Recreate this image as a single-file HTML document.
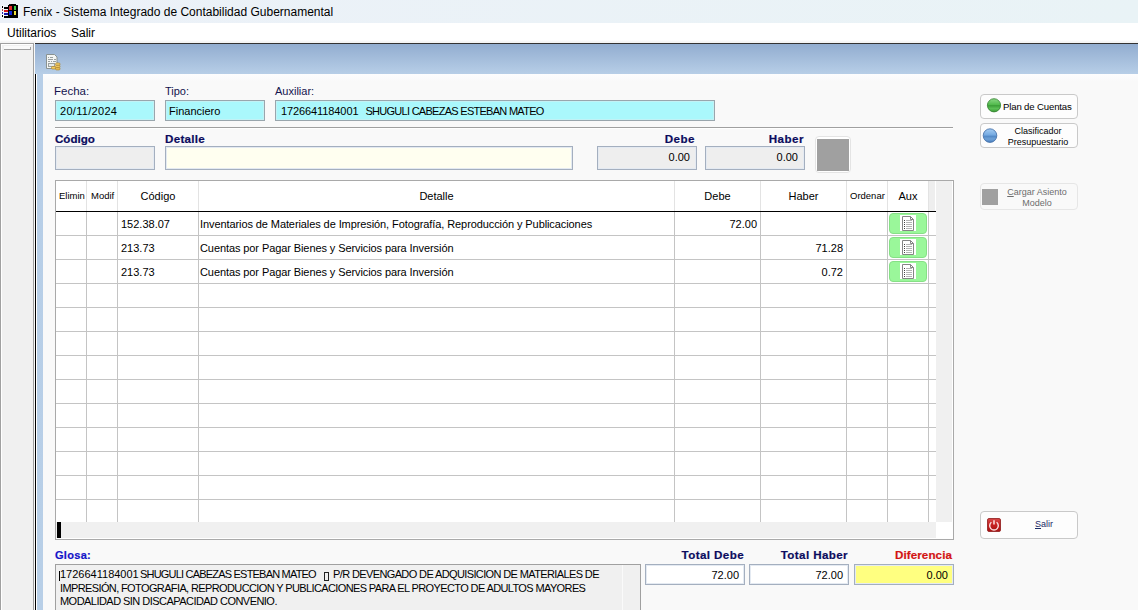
<!DOCTYPE html>
<html><head><meta charset="utf-8">
<style>
*{margin:0;padding:0;box-sizing:border-box}
html,body{width:1138px;height:610px;overflow:hidden;background:#f9f9f9;font-family:"Liberation Sans",sans-serif;color:#000}
.a{position:absolute}
.t{position:absolute;white-space:nowrap;line-height:1}
#title{left:0;top:0;width:1138px;height:23px;background:linear-gradient(90deg,#ecf1f8,#e9f3f6)}
#menu{left:0;top:23px;width:1138px;height:20px;background:linear-gradient(180deg,#fff 0,#fff 17px,#f4f4f4 19px)}
#leftp{left:0;top:43px;width:34px;height:567px;background:#f0f0f0;border-left:1px solid #a0a0a0;border-top:1px solid #a0a0a0;border-right:1px solid #a0a0a0;box-shadow:inset 1px 1px 0 #fff}
#mdi{left:34px;top:43px;width:1104px;height:567px;background:#fff}
#mdihdr{left:35px;top:43px;width:1103px;height:567px;border-top:1px solid #333;background:linear-gradient(180deg,#92add0 0px,#b7cee7 30px,#b8cfe7 567px)}
#content{left:43px;top:74px;width:1095px;height:536px;background:linear-gradient(180deg,#fdfdfe 0px,#f9f9f9 8px)}
.lbl{color:#14144e;font-size:11px}
.blbl{color:#0c0c5e;font-size:11px;font-weight:bold;-webkit-text-stroke:0.2px currentColor}
.inp{position:absolute;border:1px solid #a4afbf;box-shadow:inset 0 0 0 1px #e4eaf2}
.cyan{background:#aaf8fc;border-color:#99a6ad;box-shadow:inset 0 0 0 1px #c2f2f5}
.gray{background:#eeeeee}
.yel{background:#fffff0}
.num{font-size:11px}
.grid{position:absolute;background:#c4c4c4}
.btn{position:absolute;border:1px solid #c9c9c9;border-radius:4px;background:#fdfdfd}
.th{font-size:11px;color:#000}
.th9{font-size:9.5px;color:#000}
.cell{font-size:11px;color:#000}
.auxb{position:absolute;width:38px;height:21px;background:#9af79a;border:1px solid #86e086;border-radius:4px}
.btxt{font-size:9px;color:#000}
.gl{font-size:11px;color:#000}
</style></head><body>
<div id="title" class="a"></div>
<div class="t" style="left:23px;top:6px;font-size:12px;color:#000">Fenix - Sistema Integrado de Contabilidad Gubernamental</div>
<div id="menu" class="a"></div>
<div class="t" style="left:7px;top:27px;font-size:12px">Utilitarios</div>
<div class="t" style="left:71px;top:27px;font-size:12px">Salir</div>

<div id="leftp" class="a"></div>
<div class="a" style="left:4px;top:46px;width:26px;height:3px;background:#fafafa"></div><div class="a" style="left:4px;top:49px;width:27px;height:1px;background:#a0a0a0"></div><div class="a" style="left:30px;top:47px;width:1px;height:3px;background:#a0a0a0"></div>
<div id="mdihdr" class="a"></div>
<div class="a" style="left:35px;top:74px;width:1px;height:536px;background:#000"></div><div class="a" style="left:36px;top:74px;width:1px;height:536px;background:#fff"></div>
<div id="content" class="a"></div>
<svg class="a" style="left:0;top:0" width="22" height="22" viewBox="0 0 22 22" shape-rendering="crispEdges">
<rect x="1" y="5" width="3" height="13" fill="#fff" opacity="0.6"/>
<rect x="8" y="5" width="10" height="13" fill="#000"/><rect x="11" y="4" width="5" height="1" fill="#000"/><rect x="9" y="4" width="2" height="1" fill="#222"/>
<rect x="9" y="6" width="3" height="4" fill="#e22828"/><rect x="14" y="6" width="2" height="4" fill="#3ad04a"/>
<rect x="9" y="11" width="3" height="4" fill="#1428e0"/><rect x="14" y="11" width="2" height="4" fill="#f2e23a"/>
<rect x="2" y="6" width="1" height="2" fill="#000"/><rect x="4" y="7" width="4" height="2" fill="#000"/>
<rect x="2" y="9" width="1" height="2" fill="#b04040"/><rect x="4" y="10" width="4" height="2" fill="#d81818"/>
<rect x="2" y="12" width="1" height="2" fill="#2a2ab0"/><rect x="4" y="13" width="4" height="2" fill="#1414a8"/>
<rect x="2" y="15" width="1" height="2" fill="#000"/><rect x="4" y="16" width="4" height="2" fill="#000"/>
</svg>
<svg class="a" style="left:44px;top:52px" width="18" height="20" viewBox="0 0 18 20">
<path d="M2.5 2.5h8l2.5 2.5v11.5h-10.5z" fill="#f4f6f4" stroke="#8a9290" stroke-width="1"/>
<path d="M4 5.5h1M6 5.5h3M4 7.5h5M10 7.5h2M4 9.5h2M7 9.5h1M9 9.5h3" stroke="#9aa0a0" stroke-width="1"/>
<rect x="4.5" y="11.5" width="6" height="3" fill="#e8ecea" stroke="#9aa0a0" stroke-width="1"/>
<rect x="7.5" y="14.5" width="4" height="2.5" rx="1" fill="#f2cc62" stroke="#b08428" stroke-width="0.7"/>
<rect x="11.5" y="11" width="4.5" height="2.3" rx="1" fill="#f6d470" stroke="#b08428" stroke-width="0.7"/>
<rect x="11.5" y="13.3" width="4.5" height="2.3" rx="1" fill="#f0c860" stroke="#b08428" stroke-width="0.7"/>
<rect x="11.5" y="15.6" width="4.5" height="2.3" rx="1" fill="#e8c058" stroke="#b08428" stroke-width="0.7"/>
</svg>


<!-- header row -->
<div class="t lbl" style="left:54px;top:86px;letter-spacing:0px;font-size:11.5px">Fecha:</div>
<div class="t lbl" style="left:165px;top:86px">Tipo:</div>
<div class="t lbl" style="left:275px;top:86px">Auxiliar:</div>
<div class="inp cyan" style="left:55px;top:100px;width:100px;height:21px"></div>
<div class="inp cyan" style="left:165px;top:100px;width:100px;height:21px"></div>
<div class="inp cyan" style="left:275px;top:100px;width:440px;height:21px"></div>
<div class="t num" style="left:60px;top:106px;letter-spacing:0.3px">20/11/2024</div>
<div class="t num" style="left:169px;top:106px">Financiero</div>
<div class="t num" style="left:281px;top:106px;white-space:pre;letter-spacing:-0.1px">1726641184001<span style="letter-spacing:-0.72px">   SHUGULI CABEZAS ESTEBAN MATEO</span></div>
<div class="a" style="left:55px;top:127px;width:898px;height:1px;background:#a0a0a0"></div>
<div class="a" style="left:55px;top:128px;width:898px;height:1px;background:#fff"></div>

<div class="t blbl" style="left:55px;top:133px;font-size:11.6px;letter-spacing:0px">Código</div>
<div class="t blbl" style="left:165px;top:133px;font-size:11.6px;letter-spacing:0.3px">Detalle</div>
<div class="t blbl" style="left:597px;top:133px;width:98px;text-align:right;letter-spacing:0.5px;font-size:11.6px">Debe</div>
<div class="t blbl" style="left:705px;top:133px;width:99px;text-align:right;letter-spacing:0.5px;font-size:11.6px">Haber</div>
<div class="inp gray" style="left:55px;top:146px;width:100px;height:24px"></div>
<div class="inp yel" style="left:165px;top:146px;width:408px;height:24px"></div>
<div class="inp gray" style="left:597px;top:146px;width:100px;height:24px"></div>
<div class="inp gray" style="left:705px;top:146px;width:100px;height:24px"></div>
<div class="t num" style="left:597px;top:152px;width:93px;text-align:right">0.00</div>
<div class="t num" style="left:705px;top:152px;width:93px;text-align:right">0.00</div>
<div class="a" style="left:815px;top:136px;width:36px;height:37px;border:1px solid #e4e4e4;border-radius:4px;background:#fff"></div>
<div class="a" style="left:817px;top:139px;width:32px;height:32px;background:#a0a0a0"></div>

<!-- table -->
<div id="tbl" class="a" style="left:55px;top:180px;width:899px;height:360px;border:1px solid #a9a9a9;background:#fff"></div>
<div class="a" style="left:86px;top:181px;width:1px;height:30px;background:#e3e3e3"></div>
<div class="a" style="left:117px;top:181px;width:1px;height:30px;background:#e3e3e3"></div>
<div class="a" style="left:198px;top:181px;width:1px;height:30px;background:#e3e3e3"></div>
<div class="a" style="left:674px;top:181px;width:1px;height:30px;background:#e3e3e3"></div>
<div class="a" style="left:760px;top:181px;width:1px;height:30px;background:#e3e3e3"></div>
<div class="a" style="left:846px;top:181px;width:1px;height:30px;background:#e3e3e3"></div>
<div class="a" style="left:887px;top:181px;width:1px;height:30px;background:#e3e3e3"></div>
<div class="a" style="left:928px;top:181px;width:1px;height:30px;background:#e3e3e3"></div>
<div class="a" style="left:929px;top:181px;width:6px;height:30px;background:#eeeeee"></div>
<div class="a" style="left:56px;top:211px;width:880px;height:1px;background:#000"></div>
<div class="grid" style="left:86px;top:212px;width:1px;height:310px"></div>
<div class="grid" style="left:117px;top:212px;width:1px;height:310px"></div>
<div class="grid" style="left:198px;top:212px;width:1px;height:310px"></div>
<div class="grid" style="left:674px;top:212px;width:1px;height:310px"></div>
<div class="grid" style="left:760px;top:212px;width:1px;height:310px"></div>
<div class="grid" style="left:846px;top:212px;width:1px;height:310px"></div>
<div class="grid" style="left:887px;top:212px;width:1px;height:310px"></div>
<div class="grid" style="left:928px;top:212px;width:1px;height:310px"></div>
<div class="grid" style="left:56px;top:235px;width:880px;height:1px"></div>
<div class="grid" style="left:56px;top:259px;width:880px;height:1px"></div>
<div class="grid" style="left:56px;top:283px;width:880px;height:1px"></div>
<div class="grid" style="left:56px;top:307px;width:880px;height:1px"></div>
<div class="grid" style="left:56px;top:331px;width:880px;height:1px"></div>
<div class="grid" style="left:56px;top:355px;width:880px;height:1px"></div>
<div class="grid" style="left:56px;top:379px;width:880px;height:1px"></div>
<div class="grid" style="left:56px;top:403px;width:880px;height:1px"></div>
<div class="grid" style="left:56px;top:427px;width:880px;height:1px"></div>
<div class="grid" style="left:56px;top:451px;width:880px;height:1px"></div>
<div class="grid" style="left:56px;top:475px;width:880px;height:1px"></div>
<div class="grid" style="left:56px;top:499px;width:880px;height:1px"></div>
<!-- header labels -->
<div class="t th9" style="left:59px;top:191px">Elimin</div>
<div class="t th9" style="left:91px;top:191px">Modif</div>
<div class="t th" style="left:118px;top:191px;width:80px;text-align:center">Código</div>
<div class="t th" style="left:199px;top:191px;width:475px;text-align:center">Detalle</div>
<div class="t th" style="left:675px;top:191px;width:85px;text-align:center">Debe</div>
<div class="t th" style="left:761px;top:191px;width:85px;text-align:center">Haber</div>
<div class="t th9" style="left:850px;top:191px">Ordenar</div>
<div class="t th" style="left:888px;top:191px;width:40px;text-align:center">Aux</div>
<!-- rows -->
<div class="t cell" style="left:121px;top:219px">152.38.07</div>
<div class="t cell" style="left:200px;top:219px;letter-spacing:-0.09px">Inventarios de Materiales de Impresión, Fotografía, Reproducción y Publicaciones</div>
<div class="t cell" style="left:675px;top:219px;width:82px;text-align:right">72.00</div>
<div class="t cell" style="left:121px;top:243px">213.73</div>
<div class="t cell" style="left:200px;top:243px;letter-spacing:-0.09px">Cuentas por Pagar Bienes y Servicios para Inversión</div>
<div class="t cell" style="left:761px;top:243px;width:82px;text-align:right">71.28</div>
<div class="t cell" style="left:121px;top:267px">213.73</div>
<div class="t cell" style="left:200px;top:267px;letter-spacing:-0.09px">Cuentas por Pagar Bienes y Servicios para Inversión</div>
<div class="t cell" style="left:761px;top:267px;width:82px;text-align:right">0.72</div>
<div class="auxb" style="left:889px;top:213px"><svg width="16" height="16" viewBox="0 0 16 16" style="position:absolute;left:10px;top:1px" shape-rendering="crispEdges"><rect x="0" y="0" width="16" height="16" fill="#fff"/><path d="M2.5 1.5H10.5L13.5 4.5V15.5H2.5Z" fill="#fff" stroke="#858585" stroke-width="1" shape-rendering="auto"/><path d="M10.5 1.5V4.5H13.5" fill="none" stroke="#858585" shape-rendering="auto"/><rect x="4" y="5" width="1" height="1" fill="#444"/><rect x="4" y="7" width="1" height="1" fill="#444"/><rect x="4" y="9" width="1" height="1" fill="#444"/><rect x="4" y="11" width="1" height="1" fill="#444"/><rect x="4" y="13" width="1" height="1" fill="#444"/><rect x="6" y="5" width="6" height="1" fill="#b4b4b4"/><rect x="6" y="7" width="6" height="1" fill="#b4b4b4"/><rect x="6" y="9" width="6" height="1" fill="#b4b4b4"/><rect x="6" y="11" width="6" height="1" fill="#b4b4b4"/><rect x="6" y="13" width="6" height="1" fill="#b4b4b4"/></svg></div>
<div class="auxb" style="left:889px;top:237px"><svg width="16" height="16" viewBox="0 0 16 16" style="position:absolute;left:10px;top:1px" shape-rendering="crispEdges"><rect x="0" y="0" width="16" height="16" fill="#fff"/><path d="M2.5 1.5H10.5L13.5 4.5V15.5H2.5Z" fill="#fff" stroke="#858585" stroke-width="1" shape-rendering="auto"/><path d="M10.5 1.5V4.5H13.5" fill="none" stroke="#858585" shape-rendering="auto"/><rect x="4" y="5" width="1" height="1" fill="#444"/><rect x="4" y="7" width="1" height="1" fill="#444"/><rect x="4" y="9" width="1" height="1" fill="#444"/><rect x="4" y="11" width="1" height="1" fill="#444"/><rect x="4" y="13" width="1" height="1" fill="#444"/><rect x="6" y="5" width="6" height="1" fill="#b4b4b4"/><rect x="6" y="7" width="6" height="1" fill="#b4b4b4"/><rect x="6" y="9" width="6" height="1" fill="#b4b4b4"/><rect x="6" y="11" width="6" height="1" fill="#b4b4b4"/><rect x="6" y="13" width="6" height="1" fill="#b4b4b4"/></svg></div>
<div class="auxb" style="left:889px;top:261px"><svg width="16" height="16" viewBox="0 0 16 16" style="position:absolute;left:10px;top:1px" shape-rendering="crispEdges"><rect x="0" y="0" width="16" height="16" fill="#fff"/><path d="M2.5 1.5H10.5L13.5 4.5V15.5H2.5Z" fill="#fff" stroke="#858585" stroke-width="1" shape-rendering="auto"/><path d="M10.5 1.5V4.5H13.5" fill="none" stroke="#858585" shape-rendering="auto"/><rect x="4" y="5" width="1" height="1" fill="#444"/><rect x="4" y="7" width="1" height="1" fill="#444"/><rect x="4" y="9" width="1" height="1" fill="#444"/><rect x="4" y="11" width="1" height="1" fill="#444"/><rect x="4" y="13" width="1" height="1" fill="#444"/><rect x="6" y="5" width="6" height="1" fill="#b4b4b4"/><rect x="6" y="7" width="6" height="1" fill="#b4b4b4"/><rect x="6" y="9" width="6" height="1" fill="#b4b4b4"/><rect x="6" y="11" width="6" height="1" fill="#b4b4b4"/><rect x="6" y="13" width="6" height="1" fill="#b4b4b4"/></svg></div>
<div class="a" style="left:936px;top:181px;width:16px;height:341px;background:#f0f0f0"></div>
<div class="a" style="left:56px;top:522px;width:880px;height:16px;background:#f0f0f0"></div>
<div class="a" style="left:57px;top:522px;width:4px;height:16px;background:#000"></div>
<!-- right buttons -->
<div class="btn" style="left:980px;top:94px;width:98px;height:25px"></div>
<svg class="a" style="left:986px;top:97px" width="16" height="16" viewBox="0 0 16 16"><defs><linearGradient id="gg" x1="0" y1="0" x2="0" y2="1"><stop offset="0" stop-color="#8ad884"/><stop offset="0.48" stop-color="#4fb84a"/><stop offset="0.52" stop-color="#3c9e38"/><stop offset="0.75" stop-color="#5cc056"/><stop offset="1" stop-color="#3a9a36"/></linearGradient></defs><circle cx="8" cy="8.3" r="6.6" fill="url(#gg)" stroke="#2e7e2b" stroke-width="0.8"/></svg>
<div class="t btxt" style="left:1003px;top:102px;font-size:9.6px;letter-spacing:-0.15px">Plan de Cuentas</div>
<div class="btn" style="left:980px;top:123px;width:98px;height:25px"></div>
<svg class="a" style="left:982px;top:128px" width="16" height="16" viewBox="0 0 16 16"><defs><linearGradient id="bg2" x1="0" y1="0" x2="0" y2="1"><stop offset="0" stop-color="#a6cdf3"/><stop offset="0.48" stop-color="#72a8e0"/><stop offset="0.52" stop-color="#4f86c4"/><stop offset="0.75" stop-color="#6fa2d8"/><stop offset="1" stop-color="#4a7fbe"/></linearGradient></defs><circle cx="8" cy="7.6" r="6.8" fill="url(#bg2)" stroke="#3d6aa3" stroke-width="0.8"/></svg>
<div class="t btxt" style="left:1000px;top:126px;width:76px;text-align:center;line-height:10.8px">Clasificador<br>Presupuestario</div>
<div class="btn" style="left:980px;top:183px;width:98px;height:27px;border-color:#e6e6e6;background:#f9f9f9"></div>
<div class="a" style="left:982px;top:189px;width:16px;height:16px;background:#a0a0a0"></div>
<div class="t btxt" style="left:999px;top:187px;width:76px;text-align:center;line-height:10.5px;color:#6d6d6d"><u>C</u>argar Asiento<br>Modelo</div>
<div class="btn" style="left:980px;top:511px;width:98px;height:28px"></div>
<svg class="a" style="left:987px;top:518px" width="14" height="14" viewBox="0 0 14 14"><defs><linearGradient id="rg" x1="0" y1="0" x2="0" y2="1"><stop offset="0" stop-color="#d84848"/><stop offset="0.5" stop-color="#c42020"/><stop offset="1" stop-color="#a81414"/></linearGradient></defs><rect x="0.5" y="0.5" width="13" height="13" rx="1.5" fill="url(#rg)" stroke="#8e1a1a" stroke-width="0.8"/><path d="M4.4 4.3 A4.3 4.3 0 1 0 9.6 4.3" stroke="#fbe4e4" stroke-width="1.4" fill="none"/><path d="M7 2.2v4.4" stroke="#fbe4e4" stroke-width="1.5"/></svg>
<div class="t btxt" style="left:1035px;top:520px;color:#1e2c66"><u>S</u>alir</div>

<!-- bottom -->
<div class="t" style="left:55px;top:550px;font-size:11px;font-weight:bold;color:#1414c8;letter-spacing:0.3px;-webkit-text-stroke:0.2px currentColor">Glosa:</div>
<div class="a" style="left:55px;top:564px;width:586px;height:46px;border:1px solid #a0a0a0;border-bottom:none;background:#f0f0f0"></div>
<div class="a" style="left:622px;top:565px;width:1px;height:45px;background:#fafafa"></div>
<div class="a" style="left:59px;top:571px;width:1px;height:10px;background:#000"></div>
<div class="t gl" style="left:60px;top:569px;letter-spacing:0px">1726641184001</div>
<div class="t gl" style="left:140px;top:569px;letter-spacing:-0.8px">SHUGULI CABEZAS ESTEBAN MATEO</div>
<div class="a" style="left:324px;top:572px;width:5px;height:9px;border:1px solid #222"></div>
<div class="t gl" style="left:333px;top:569px;letter-spacing:-0.62px">P/R DEVENGADO DE ADQUISICION DE MATERIALES DE</div>
<div class="t gl" style="left:60px;top:583px;letter-spacing:-0.62px">IMPRESIÓN, FOTOGRAFIA, REPRODUCCION Y PUBLICACIONES PARA EL PROYECTO DE ADULTOS MAYORES</div>
<div class="t gl" style="left:60px;top:596px;letter-spacing:-0.54px">MODALIDAD SIN DISCAPACIDAD CONVENIO.</div>
<div class="t blbl" style="left:600px;top:549px;width:144px;text-align:right;letter-spacing:0.4px;font-size:11.6px">Total Debe</div>
<div class="t blbl" style="left:700px;top:549px;width:148px;text-align:right;letter-spacing:0.4px;font-size:11.6px">Total Haber</div>
<div class="t blbl" style="left:800px;top:549px;width:152px;text-align:right;letter-spacing:0.1px;font-size:11.6px;color:#d21414">Diferencia</div>
<div class="inp" style="left:645px;top:564px;width:100px;height:21px;background:#fff"></div>
<div class="inp" style="left:749px;top:564px;width:100px;height:21px;background:#fff"></div>
<div class="inp" style="left:854px;top:564px;width:100px;height:21px;background:#ffff80"></div>
<div class="t num" style="left:645px;top:570px;width:94px;text-align:right">72.00</div>
<div class="t num" style="left:749px;top:570px;width:94px;text-align:right">72.00</div>
<div class="t num" style="left:854px;top:570px;width:94px;text-align:right">0.00</div>
</body></html>
